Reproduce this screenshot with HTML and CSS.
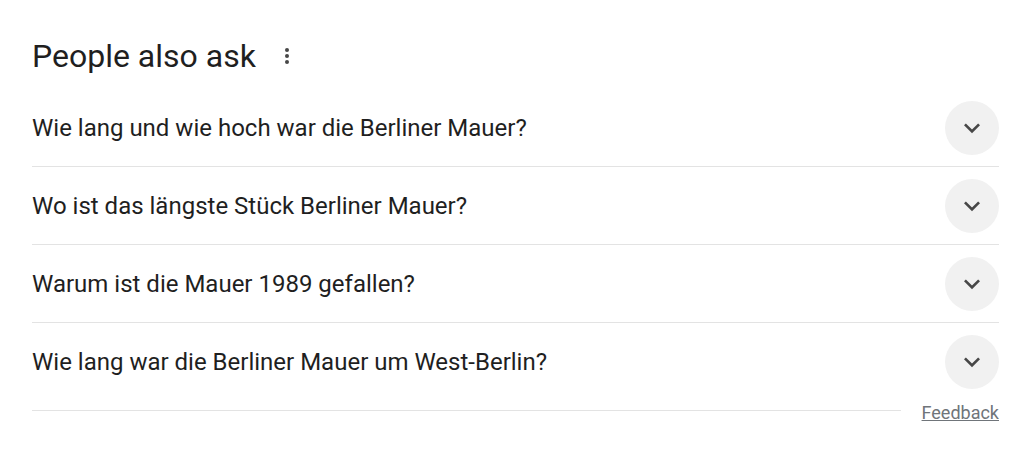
FILE: index.html
```html
<!DOCTYPE html>
<html lang="de">
<head>
<meta charset="utf-8">
<title>People also ask</title>
<link rel="stylesheet" href="styles.css">
</head>
<body>
<div class="paa">
  <div class="paa-head">
    <h2 class="paa-title">People also ask</h2>
    <span class="paa-menu" aria-label="Mehr Optionen">
      <svg width="4" height="16" viewBox="0 0 4 16"><circle cx="2" cy="2" r="2"/><circle cx="2" cy="8" r="2"/><circle cx="2" cy="14" r="2"/></svg>
    </span>
  </div>
  <div class="paa-list">
    <div class="paa-row">
      <span class="paa-q">Wie lang und wie hoch war die Berliner Mauer?</span>
      <span class="paa-btn"><svg width="32" height="32" viewBox="0 0 24 24"><path d="M7.41 8.59 12 13.17l4.59-4.58L18 10l-6 6-6-6z"/></svg></span>
    </div>
    <div class="paa-row">
      <span class="paa-q">Wo ist das längste Stück Berliner Mauer?</span>
      <span class="paa-btn"><svg width="32" height="32" viewBox="0 0 24 24"><path d="M7.41 8.59 12 13.17l4.59-4.58L18 10l-6 6-6-6z"/></svg></span>
    </div>
    <div class="paa-row">
      <span class="paa-q">Warum ist die Mauer 1989 gefallen?</span>
      <span class="paa-btn"><svg width="32" height="32" viewBox="0 0 24 24"><path d="M7.41 8.59 12 13.17l4.59-4.58L18 10l-6 6-6-6z"/></svg></span>
    </div>
    <div class="paa-row paa-row-last">
      <span class="paa-q">Wie lang war die Berliner Mauer um West-Berlin?</span>
      <span class="paa-btn"><svg width="32" height="32" viewBox="0 0 24 24"><path d="M7.41 8.59 12 13.17l4.59-4.58L18 10l-6 6-6-6z"/></svg></span>
    </div>
  </div>
  <div class="paa-foot">
    <div class="paa-foot-line"></div>
    <a class="paa-feedback" href="#">Feedback</a>
  </div>
</div>
</body>
</html>
```
FILE: styles.css
```css
html, body {
  margin: 0;
  padding: 0;
  background: #ffffff;
}
body {
  font-family: Roboto, "Liberation Sans", Arial, sans-serif;
  color: #1f1f1f;
}
.paa {
  padding: 35px 25px 0 32px;
}
.paa-head {
  display: flex;
  align-items: center;
  height: 42px;
}
.paa-title {
  margin: 0;
  font-size: 32px;
  font-weight: 400;
  line-height: 42px;
  color: #1f1f1f;
}
.paa-menu {
  display: flex;
  margin-left: 29px;
  fill: #474747;
}
.paa-list {
  margin-top: 12px;
}
.paa-row {
  display: flex;
  align-items: center;
  justify-content: space-between;
  height: 77px;
  border-bottom: 1px solid #e3e3e3;
}
.paa-row-last {
  border-bottom: none;
}
.paa-q {
  font-size: 24px;
  line-height: 30px;
  color: #1f1f1f;
}
.paa-btn {
  display: flex;
  align-items: center;
  justify-content: center;
  width: 54px;
  height: 54px;
  border-radius: 50%;
  background: #f1f1f1;
  fill: #474747;
}
.paa-foot {
  display: flex;
  align-items: flex-start;
}
.paa-foot-line {
  flex: 1;
  height: 1px;
  margin-top: 10px;
  background: #e3e3e3;
  margin-right: 21px;
}
.paa-feedback {
  margin-top: 2px;
  font-size: 18px;
  line-height: 22px;
  color: #70757a;
  text-decoration: underline;
}
```
